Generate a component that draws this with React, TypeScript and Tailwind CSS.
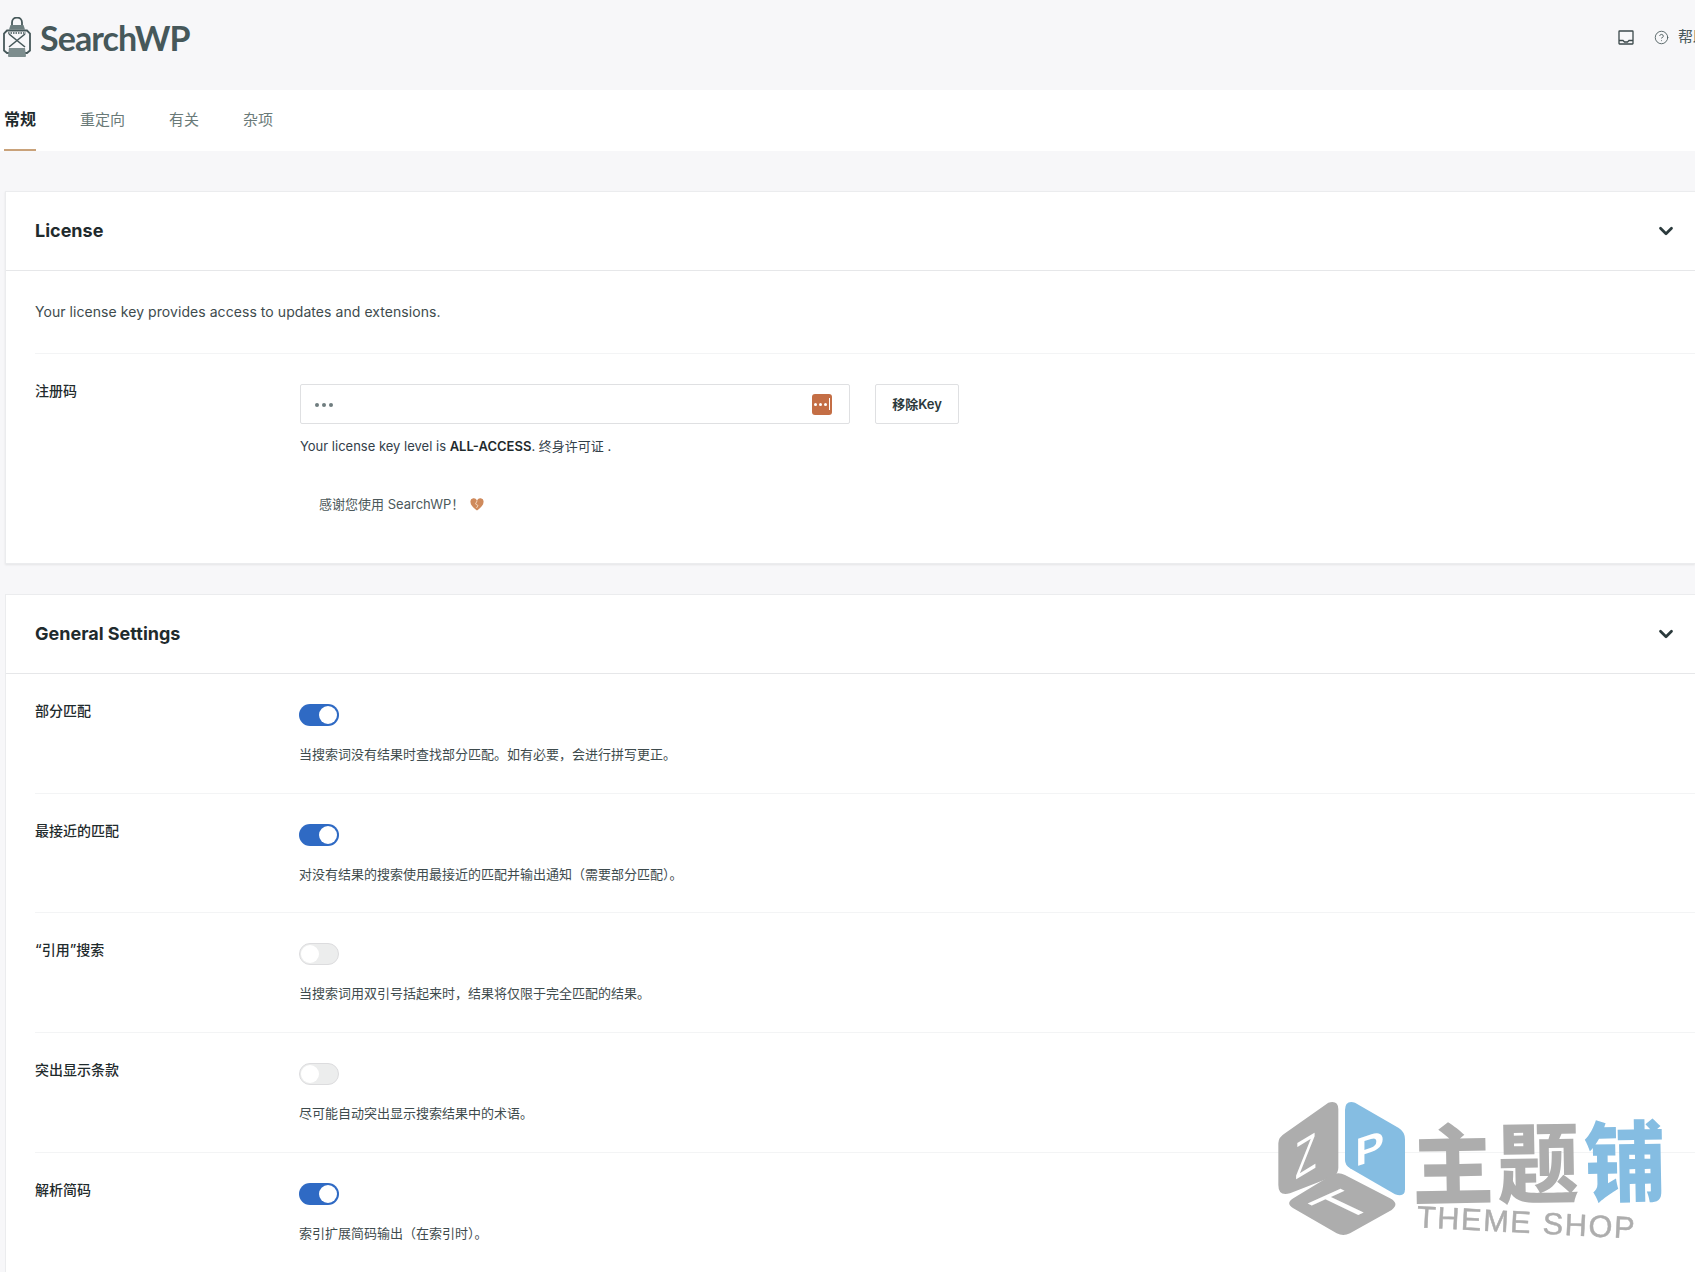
import { ChevronDown, CircleHelp } from 'lucide-react';

const rows = [
  { label: '部分匹配', on: true, desc: '当搜索词没有结果时查找部分匹配。如有必要，会进行拼写更正。' },
  { label: '最接近的匹配', on: true, desc: '对没有结果的搜索使用最接近的匹配并输出通知（需要部分匹配）。' },
  { label: '“引用”搜索', on: false, desc: '当搜索词用双引号括起来时，结果将仅限于完全匹配的结果。' },
  { label: '突出显示条款', on: false, desc: '尽可能自动突出显示搜索结果中的术语。' },
  { label: '解析简码', on: true, desc: '索引扩展简码输出（在索引时）。' },
];

function Lantern() {
  return (
    <svg width="28" height="41" viewBox="0 0 28 41" fill="none" stroke="#46585a" strokeWidth="1.800">
      <path d="M9 8V5.500a5 5 0 0 1 10 0V8" />
      <path d="M7.500 8h13l1.500 4.500H6z" fill="#6d7e7f" stroke="none" />
      <path d="M4 13.500h20l3 3v17l-3 2.500H4l-3-2.500v-17z" />
      <path d="M5 16h18" strokeDasharray="1.500 1" strokeWidth="1.500" />
      <path d="M6 17l16 13M22 17L6 30" strokeWidth="1.600" />
      <path d="M6 31h16l1 8a1 1 0 0 1-1 1H6a1 1 0 0 1-1-1z" fill="#7d8d8e" stroke="none" />
    </svg>
  );
}

function InboxIcon() {
  return (
    <svg width="16" height="15" viewBox="0 0 16 15" fill="none" stroke="#3c4a4c" strokeWidth="1.300">
      <rect x="1" y="1" width="14" height="13" rx="0.500" />
      <path d="M1 10.500h4l1.500 1.500h3l1.500-1.500h4" />
    </svg>
  );
}

function Heart() {
  return (
    <svg width="14" height="13" viewBox="0 0 14 13">
      <path d="M7 12.500C3 9.500.5 7 .5 4.200A3.300 3.300 0 0 1 7 3a3.300 3.300 0 0 1 6.500 1.200C13.500 7 11 9.500 7 12.500z" fill="#cf8a5c" />
      <path d="M7 3 5.500 6 8 7.500 6.500 10" fill="none" stroke="#f3d9c2" strokeWidth="0.900" />
    </svg>
  );
}

function Toggle({ on }: { on: boolean }) {
  return on ? (
    <div className="flex h-[22px] w-10 items-center justify-end rounded-full bg-[#2f6ac4] pr-[2px]">
      <div className="h-[18px] w-[18px] rounded-full bg-white" />
    </div>
  ) : (
    <div className="flex h-[22px] w-10 items-center rounded-full border border-[#dcdcde] bg-[#eceded] pl-[1px]">
      <div className="h-[18px] w-[18px] rounded-full bg-white" />
    </div>
  );
}

function CardHeader({ title }: { title: string }) {
  return (
    <div className="flex h-[79px] items-center justify-between border-b border-[#e6e7e9] pb-[1px] pl-[29px] pr-[18px]">
      <h2 className="text-[18px] font-bold text-[#1f2b2d]">{title}</h2>
      <ChevronDown className="h-[22px] w-[22px] text-[#2b3a3c]" strokeWidth={3} />
    </div>
  );
}

function Watermark() {
  return (
    <svg className="absolute bottom-0 right-0 blur-[0.5px]" width="435" height="192" viewBox="0 0 1305 576">
      <path d="M75 160 205 68q30-8 30 20v175q0 16-14 26L90 340q-35 10-35-25V190q0-18 20-30z" fill="#adadad" />
      <path d="M255 90q0-30 30-22l130 75q20 12 20 35v150q0 25-30 15L270 265q-15-10-15-25z" fill="#85bde2" />
      <path d="M100 355 215 285q20-10 40 0l135 70q30 16 5 35L270 460q-20 10-40 0L100 385q-25-15 0-30z" fill="#adadad" />
      <text fontSize="155" fill="#fff" fontFamily="Liberation Sans, sans-serif" transform="matrix(0.68 -0.41 0 1 105 300)">Z</text>
      <text fontSize="118" fontWeight="700" fill="#fff" fontFamily="Liberation Sans, sans-serif" transform="matrix(1.1 -0.36 0 1 286 260)">P</text>
      <text fontSize="120" fill="#fff" fontFamily="Liberation Sans, sans-serif" transform="matrix(1.45 -0.65 1.34 0.64 250 425)">T</text>
      <g fontFamily="Noto Sans CJK SC, sans-serif" fontWeight="900" fontSize="244" transform="rotate(-1 840 230) scale(1 1.08)">
        <text x="456" y="322" fill="#adadad">主</text>
        <text x="712" y="322" fill="#adadad">题</text>
        <text x="972" y="322" fill="#85bde2">铺</text>
      </g>
      <text x="470" y="442" fontSize="92" letterSpacing="5" fill="#adadad" stroke="#adadad" strokeWidth="1.500" fontFamily="Liberation Sans, sans-serif" transform="rotate(3 478 432)">THEME SHOP</text>
    </svg>
  );
}

export default function App() {
  return (
    <div className="relative h-[1272px] w-full overflow-hidden bg-[#f7f7f9] font-['Inter','Noto_Sans_CJK_SC',sans-serif] text-[13px] text-[#33404a]">
      <header className="flex h-[90px] items-center justify-between pb-[15px]">
        <div className="flex items-center gap-[9px] pl-[3px]">
          <Lantern />
          <span className="font-['Lato',sans-serif] text-[34px] font-bold tracking-[-0.9px] text-[#46585a]">SearchWP</span>
        </div>
        <div className="mr-[-13px] flex items-center gap-[11px] text-[#4a5a5c]">
          <InboxIcon />
          <div className="ml-[9px] flex items-center gap-[9px]">
            <CircleHelp className="h-[15px] w-[15px]" strokeWidth={1.4} />
            <span className="text-[15px]">帮助</span>
          </div>
        </div>
      </header>

      <nav className="flex h-[61px] gap-[44px] bg-white pl-1 text-[15px] text-[#6a7a78]">
        <a className="flex h-[61px] items-center border-b-2 border-[#c9a27a] pb-[1px] text-[16px] font-bold text-[#1f2b2d]">常规</a>
        <a className="flex items-center pb-[1px]">重定向</a>
        <a className="flex items-center pb-[1px]">有关</a>
        <a className="flex items-center pb-[1px]">杂项</a>
      </nav>

      <section className="ml-[5px] mt-10 h-[373px] border border-r-0 border-[#ebecee] bg-white shadow-[0_1px_2px_rgba(0,0,0,0.08)]">
        <CardHeader title="License" />
        <div className="pl-[29px]">
          <p className="flex h-[83px] items-center border-b border-[#f3f4f5] pb-[2px] text-[14px] tracking-[0.06px] text-[#3e4b4d]">
            Your license key provides access to updates and extensions.
          </p>
          <div className="flex pt-[30px]">
            <label className="w-[265px] text-[14px] font-medium leading-[14px] text-[#1f2b2d]">注册码</label>
            <div>
              <div className="flex gap-[25px]">
                <div className="flex h-[40px] w-[550px] items-center justify-between rounded-[2px] border border-[#dfe0e2] bg-white pl-[14px] pr-[17px]">
                  <div className="mt-[2px] flex gap-[3px]">
                    <span className="h-1 w-1 rounded-full bg-[#6f7d7f]" />
                    <span className="h-1 w-1 rounded-full bg-[#6f7d7f]" />
                    <span className="h-1 w-1 rounded-full bg-[#6f7d7f]" />
                  </div>
                  <div className="flex h-[21px] w-5 items-center justify-center gap-[2px] rounded-[3px] bg-[#c46e45]">
                    <span className="h-[3px] w-[3px] rounded-full bg-white" />
                    <span className="h-[3px] w-[3px] rounded-full bg-white" />
                    <span className="h-[3px] w-[3px] rounded-full bg-white" />
                    <span className="h-[12px] w-px bg-white" />
                  </div>
                </div>
                <button className="h-[40px] w-[84px] rounded-[2px] border border-[#dfe0e2] bg-white pt-[1px] text-[13px] font-semibold text-[#2c393b]">移除Key</button>
              </div>
              <p className="mt-[12px] leading-[20px]">
                Your license key level is <b className="font-semibold text-[#1f2b2d]">ALL-ACCESS</b>. 终身许可证 .
              </p>
              <p className="mt-[38px] flex items-center gap-[6px] pl-[19px] leading-[20px] text-[#4c595b]">
                感谢您使用 SearchWP！
                <Heart />
              </p>
            </div>
          </div>
        </div>
      </section>

      <section className="ml-[5px] mt-[30px] border border-r-0 border-[#ebecee] bg-white">
        <CardHeader title="General Settings" />
        <div className="pl-[29px]">
          {rows.map((row, i) => (
            <div key={row.label} className={`flex h-[119.7px] pt-[30px] ${i < rows.length - 1 ? 'border-b border-[#f3f4f5]' : ''}`}>
              <label className="w-[264px] text-[14px] font-medium leading-[14px] text-[#1f2b2d]">{row.label}</label>
              <div>
                <Toggle on={row.on} />
                <p className="mt-[18px] leading-[20px] text-[#3e4b4d]">{row.desc}</p>
              </div>
            </div>
          ))}
        </div>
      </section>

      <Watermark />
    </div>
  );
}
